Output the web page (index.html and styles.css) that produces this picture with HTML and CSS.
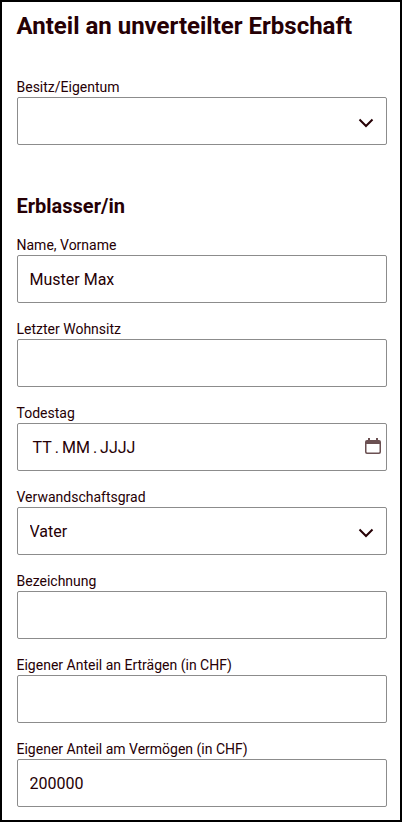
FILE: index.html
```html
<!DOCTYPE html>
<html lang="de">
<head>
  <meta charset="UTF-8">
  <meta name="viewport" content="width=device-width, initial-scale=1.0">
  <title>Anteil an unverteilter Erbschaft</title>
  <link rel="stylesheet" href="styles.css">
</head>
<body>
  <form class="form">
    <h1>Anteil an unverteilter Erbschaft</h1>

    <div class="field">
      <label for="besitz">Besitz/Eigentum</label>
      <div class="control">
        <select id="besitz">
          <option></option>
        </select>
        <svg class="chevron" width="16" height="10" viewBox="0 0 16 10">
          <path d="M1.5 1.5L8 8L14.5 1.5"/>
        </svg>
      </div>
    </div>

    <h2>Erblasser/in</h2>

    <div class="field">
      <label for="name">Name, Vorname</label>
      <div class="control">
        <input type="text" id="name" value="Muster Max">
      </div>
    </div>

    <div class="field">
      <label for="wohnsitz">Letzter Wohnsitz</label>
      <div class="control">
        <input type="text" id="wohnsitz">
      </div>
    </div>

    <div class="field">
      <label>Todestag</label>
      <div class="control date">
        <div class="date-text"><span>TT</span><span>.</span><span>MM</span><span>.</span><span>JJJJ</span></div>
        <svg class="calendar" width="16" height="16" viewBox="0 0 16 16">
          <path d="M3 0h2v2h6V0h2v2h1a2 2 0 0 1 2 2v10a2 2 0 0 1-2 2H2a2 2 0 0 1-2-2V4a2 2 0 0 1 2-2h1zM1.5 6v7.8a.7.7 0 0 0 .7.7h11.6a.7.7 0 0 0 .7-.7V6z" fill-rule="evenodd"/>
        </svg>
      </div>
    </div>

    <div class="field">
      <label for="grad">Verwandschaftsgrad</label>
      <div class="control">
        <select id="grad">
          <option>Vater</option>
        </select>
        <svg class="chevron" width="16" height="10" viewBox="0 0 16 10">
          <path d="M1.5 1.5L8 8L14.5 1.5"/>
        </svg>
      </div>
    </div>

    <div class="field">
      <label for="bezeichnung">Bezeichnung</label>
      <div class="control">
        <input type="text" id="bezeichnung">
      </div>
    </div>

    <div class="field">
      <label for="ertraege">Eigener Anteil an Erträgen (in CHF)</label>
      <div class="control">
        <input type="text" id="ertraege">
      </div>
    </div>

    <div class="field">
      <label for="vermoegen">Eigener Anteil am Vermögen (in CHF)</label>
      <div class="control">
        <input type="text" id="vermoegen" value="200000">
      </div>
    </div>
  </form>
</body>
</html>
```
FILE: styles.css
```css
* {
  box-sizing: border-box;
}

body {
  margin: 0;
  font-family: Roboto, 'Liberation Sans', sans-serif;
  color: #260005;
  background-color: #fff;
}

.form {
  height: 822px;
  padding: 8px 13px 0 15px;
  border: 2px solid #000;
}

h1 {
  margin: 0 0 35px;
  font-size: 24px;
  line-height: 32px;
  font-weight: 700;
  text-indent: -0.5px;
}

h2 {
  margin: 48px 0 16px;
  font-size: 20px;
  line-height: 26px;
  font-weight: 700;
  text-indent: -0.5px;
}

.field {
  margin-bottom: 16px;
}

label {
  display: block;
  font-size: 14px;
  line-height: 20px;
  text-indent: -0.5px;
}

.control {
  display: flex;
  align-items: center;
  width: 370px;
  height: 48px;
  padding: 0 12px 0 11.5px;
  border: 1px solid #8c8c8c;
  border-radius: 2px;
}

input,
select {
  flex: 1;
  min-width: 0;
  height: 46px;
  padding: 0;
  border: none;
  outline: none;
  appearance: none;
  background: none;
  font-family: inherit;
  font-size: 16px;
  color: inherit;
}

.chevron {
  margin-top: 3px;
  fill: none;
  stroke: #260005;
  stroke-width: 2;
}

.date {
  justify-content: space-between;
  padding: 0 5px 0 14.5px;
}

.date-text {
  display: flex;
  gap: 3px;
  font-size: 16px;
}

.calendar {
  margin-bottom: 2px;
  fill: #6b5052;
}
```
